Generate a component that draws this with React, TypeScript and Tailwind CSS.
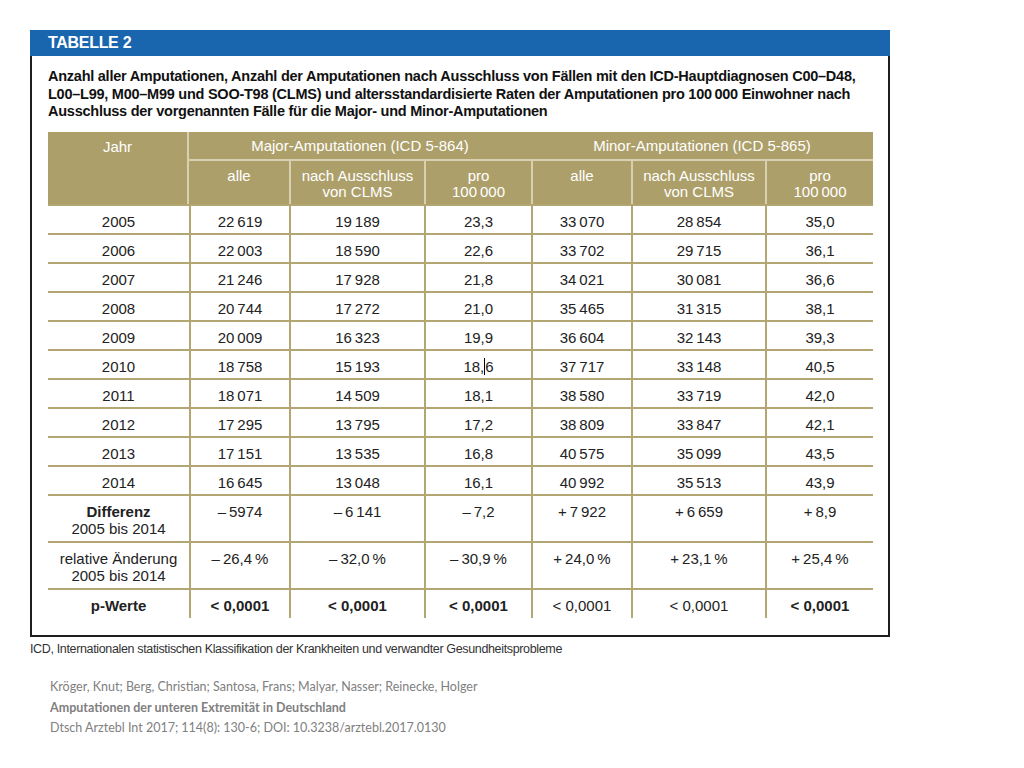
import React from "react";

const narrow = { fontFamily: '"Liberation Sans Narrow", "Arial Narrow", "Liberation Sans", sans-serif' };

const cols = "grid grid-cols-[141px_100px_135px_107px_100px_134px_108px]";

type Row = { label: React.ReactNode; cells: React.ReactNode[]; tall?: boolean; last?: boolean };

const T = "\u2009";

const years: Row[] = [
  { label: "2005", cells: [`22${T}619`, `19${T}189`, "23,3", `33${T}070`, `28${T}854`, "35,0"] },
  { label: "2006", cells: [`22${T}003`, `18${T}590`, "22,6", `33${T}702`, `29${T}715`, "36,1"] },
  { label: "2007", cells: [`21${T}246`, `17${T}928`, "21,8", `34${T}021`, `30${T}081`, "36,6"] },
  { label: "2008", cells: [`20${T}744`, `17${T}272`, "21,0", `35${T}465`, `31${T}315`, "38,1"] },
  { label: "2009", cells: [`20${T}009`, `16${T}323`, "19,9", `36${T}604`, `32${T}143`, "39,3"] },
  {
    label: "2010",
    cells: [
      `18${T}758`,
      `15${T}193`,
      <span key="c">
        18,
        <span className="inline-block w-px h-[17px] bg-black align-[-3px]" />6
      </span>,
      `37${T}717`,
      `33${T}148`,
      "40,5",
    ],
  },
  { label: "2011", cells: [`18${T}071`, `14${T}509`, "18,1", `38${T}580`, `33${T}719`, "42,0"] },
  { label: "2012", cells: [`17${T}295`, `13${T}795`, "17,2", `38${T}809`, `33${T}847`, "42,1"] },
  { label: "2013", cells: [`17${T}151`, `13${T}535`, "16,8", `40${T}575`, `35${T}099`, "43,5"] },
  { label: "2014", cells: [`16${T}645`, `13${T}048`, "16,1", `40${T}992`, `35${T}513`, "43,9"] },
];

const extra: Row[] = [
  {
    label: (
      <>
        <span className="font-bold">Differenz</span>
        <br />
        2005 bis 2014
      </>
    ),
    cells: [`–${T}5974`, `–${T}6${T}141`, `–${T}7,2`, `+${T}7${T}922`, `+${T}6${T}659`, `+${T}8,9`],
    tall: true,
  },
  {
    label: (
      <>
        relative Änderung
        <br />
        2005 bis 2014
      </>
    ),
    cells: [`–${T}26,4${T}%`, `–${T}32,0${T}%`, `–${T}30,9${T}%`, `+${T}24,0${T}%`, `+${T}23,1${T}%`, `+${T}25,4${T}%`],
    tall: true,
  },
  {
    label: <span className="font-bold">p-Werte</span>,
    cells: [
      <b key="1">&lt; 0,0001</b>,
      <b key="2">&lt; 0,0001</b>,
      <b key="3">&lt; 0,0001</b>,
      "< 0,0001",
      "< 0,0001",
      <b key="6">&lt; 0,0001</b>,
    ],
    last: true,
  },
];

function DataRow({ row }: { row: Row }) {
  const h = row.tall ? "h-[47px]" : row.last ? "h-[28px]" : "h-[29px]";
  return (
    <div className={`${cols} ${h} ${row.last ? "" : "border-b-2 border-[#b3a673]"}`}>
      <div className="text-center leading-[17px] pt-[7px]">{row.label}</div>
      {row.cells.map((c, i) => (
        <div key={i} className="border-l-2 border-[#b3a673] text-center leading-[17px] pt-[7px]">
          {c}
        </div>
      ))}
    </div>
  );
}

export default function App() {
  return (
    <main className="min-h-[768px] w-[1024px] bg-white pt-[30px]">
      <div className="ml-[30px] w-[860px]">
        <div className="h-[26px] bg-[#1a66ae] pl-[18px] flex items-center">
          <span style={narrow} className="text-white font-bold text-[16px] leading-none tracking-[-0.3px]">
            TABELLE 2
          </span>
        </div>
        <div className="h-[581px] border-2 border-t-0 border-[#1f1f1f] px-[16px] pt-[12px]" style={narrow}>
          <p className="text-[14.5px] font-bold leading-[17.5px] text-[#111] tracking-[-0.25px] whitespace-nowrap">
            Anzahl aller Amputationen, Anzahl der Amputationen nach Ausschluss von Fällen mit den ICD-Hauptdiagnosen C00–D48,
            <br />
            L00–L99, M00–M99 und SOO-T98 (CLMS) und altersstandardisierte Raten der Amputationen pro 100{T}000 Einwohner nach
            <br />
            Ausschluss der vorgenannten Fälle für die Major- und Minor-Amputationen
          </p>

          <div className="mt-[11px] w-[825px] text-[15px] text-[#222]">
            {/* header */}
            <div className="bg-[#ad9f6a] text-white flex h-[74px] border-b-2 border-[#b3a673]">
              <div className="w-[141px] text-center pt-[6px] leading-[17px]">Jahr</div>
              <div className="flex-1 border-l-2 border-[#d8d0b0] flex flex-col">
                <div className="h-[29px] flex border-b-2 border-[#d8d0b0]">
                  <div className="w-[342px] text-center pt-[5px] leading-[17px]">Major-Amputationen (ICD 5-864)</div>
                  <div className="flex-1 text-center pt-[5px] leading-[17px]">Minor-Amputationen (ICD 5-865)</div>
                </div>
                <div className="grid grid-cols-[100px_135px_107px_100px_134px_108px] flex-1 leading-[16px]">
                  <div className="text-center pt-[7px]">alle</div>
                  <div className="text-center pt-[7px] border-l-2 border-[#d8d0b0]">
                    nach Ausschluss
                    <br />
                    von CLMS
                  </div>
                  <div className="text-center pt-[7px] border-l-2 border-[#d8d0b0]">
                    pro
                    <br />
                    100{T}000
                  </div>
                  <div className="text-center pt-[7px] border-l-2 border-[#d8d0b0]">alle</div>
                  <div className="text-center pt-[7px] border-l-2 border-[#d8d0b0]">
                    nach Ausschluss
                    <br />
                    von CLMS
                  </div>
                  <div className="text-center pt-[7px] border-l-2 border-[#d8d0b0]">
                    pro
                    <br />
                    100{T}000
                  </div>
                </div>
              </div>
            </div>
            {years.map((r, i) => (
              <DataRow key={i} row={r} />
            ))}
            {extra.map((r, i) => (
              <DataRow key={i} row={r} />
            ))}
          </div>
        </div>
        <p style={narrow} className="text-[12.5px] text-[#333] mt-[4px] leading-[16px] tracking-[-0.35px]">
          ICD, Internationalen statistischen Klassifikation der Krankheiten und verwandter Gesundheitsprobleme
        </p>
      </div>
      <div className="ml-[50px] mt-[20px] text-[12.5px] leading-[20.5px] text-[#808080]" style={{ fontFamily: "Lato, sans-serif" }}>
        <p>Kröger, Knut; Berg, Christian; Santosa, Frans; Malyar, Nasser; Reinecke, Holger</p>
        <p className="font-bold">Amputationen der unteren Extremität in Deutschland</p>
        <p>Dtsch Arztebl Int 2017; 114(8): 130-6; DOI: 10.3238/arztebl.2017.0130</p>
      </div>
    </main>
  );
}
